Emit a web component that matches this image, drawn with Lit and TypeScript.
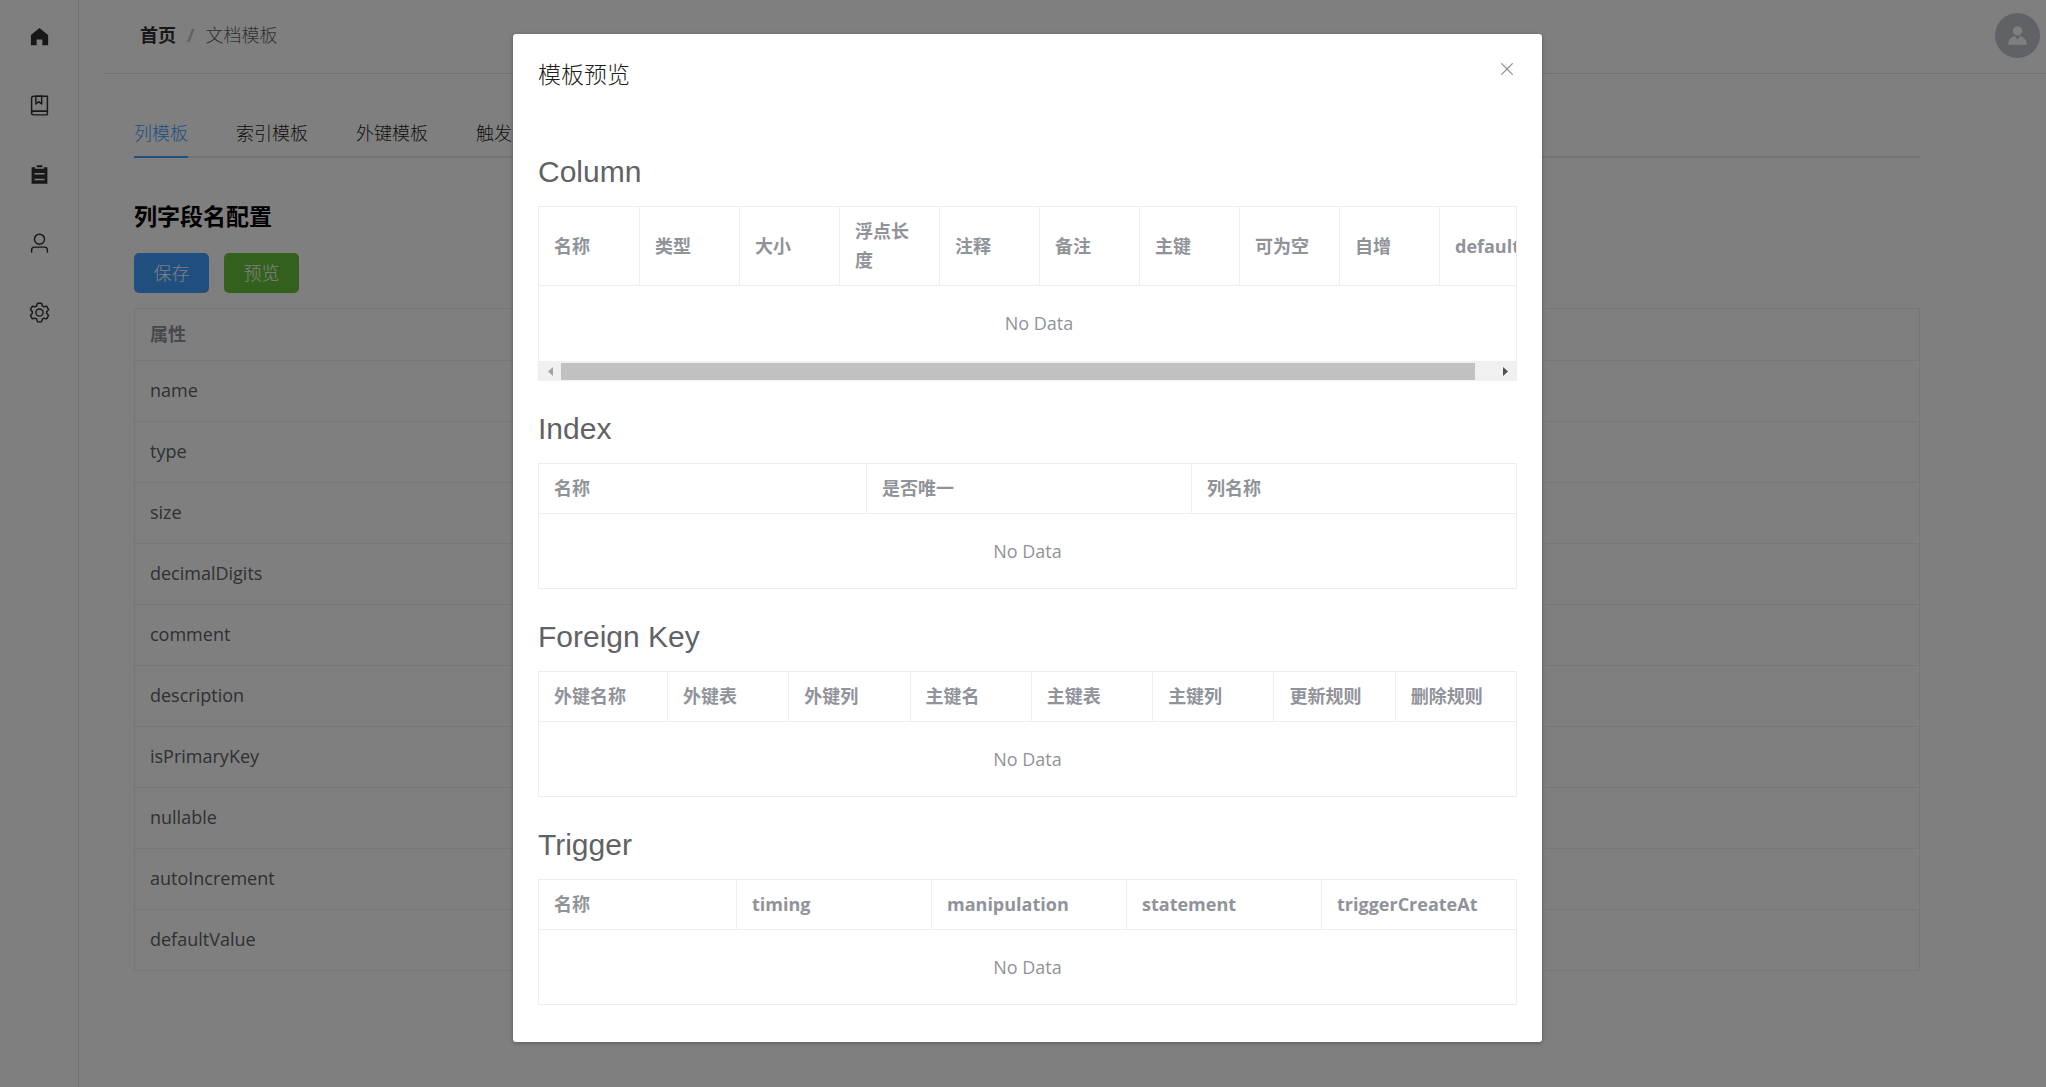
import { LitElement, html, css, svg } from "lit";
import { customElement, property } from "lit/decorators.js";

const ICONS: Record<string, string[]> = {
  home: ["M512 128 128 447.936V896h255.936V640H640v256h255.936V447.936z"],
  collection: [
    "M192 736h640V128H256a64 64 0 0 0-64 64v544zm64-672h608a32 32 0 0 1 32 32v672a32 32 0 0 1-32 32H160l-32 57.536V192A128 128 0 0 1 256 64z",
    "M240 800a48 48 0 1 0 0 96h592v-96H240zm0-64h656v160a64 64 0 0 1-64 64H240a112 112 0 0 1 0-224zm144-608v250.88l96-76.8 96 76.8V128H384zm-64-64h320v381.44a32 32 0 0 1-51.968 24.96L480 384l-108.032 86.4A32 32 0 0 1 320 445.44V64z",
  ],
  list: [
    "M704 192h160v736H160V192h160v64h384v-64zM288 512h448v-64H288v64zm0 256h448v-64H288v64zm96-576V96h256v96H384z",
  ],
  user: [
    "M512 512a192 192 0 1 0 0-384 192 192 0 0 0 0 384zm0 64a256 256 0 1 1 0-512 256 256 0 0 1 0 512zm320 320v-96a96 96 0 0 0-96-96H288a96 96 0 0 0-96 96v96a32 32 0 1 1-64 0v-96a160 160 0 0 1 160-160h448a160 160 0 0 1 160 160v96a32 32 0 1 1-64 0z",
  ],
  setting: [
    "M600.704 64a32 32 0 0 1 30.464 22.208l35.2 109.376c14.784 7.232 28.928 15.36 42.432 24.512l112.384-24.192a32 32 0 0 1 34.432 15.36L944.32 364.8a32 32 0 0 1-4.032 37.504l-77.12 85.12a357.12 357.12 0 0 1 0 49.024l77.12 85.248a32 32 0 0 1 4.032 37.504l-88.704 153.6a32 32 0 0 1-34.432 15.296L708.8 803.904c-13.44 9.088-27.648 17.28-42.368 24.512l-35.264 109.376A32 32 0 0 1 600.704 960H423.296a32 32 0 0 1-30.464-22.208L357.696 828.48a351.616 351.616 0 0 1-42.56-24.64l-112.32 24.256a32 32 0 0 1-34.432-15.36L79.68 659.2a32 32 0 0 1 4.032-37.504l77.12-85.248a357.12 357.12 0 0 1 0-48.896l-77.12-85.248A32 32 0 0 1 79.68 364.8l88.704-153.6a32 32 0 0 1 34.432-15.296l112.32 24.256c13.568-9.152 27.776-17.408 42.56-24.64l35.2-109.312A32 32 0 0 1 423.232 64H600.64zm-23.424 64H446.72l-36.352 113.088-24.512 11.968a294.113 294.113 0 0 0-34.816 20.096l-22.656 15.36-116.224-25.088-65.28 113.152 79.68 88.192-1.92 27.136a293.12 293.12 0 0 0 0 40.192l1.92 27.136-79.808 88.192 65.344 113.152 116.224-25.024 22.656 15.296a294.113 294.113 0 0 0 34.816 20.096l24.512 11.968L446.72 896h130.688l36.48-113.152 24.448-11.904a288.282 288.282 0 0 0 34.752-20.096l22.592-15.296 116.288 25.024 65.28-113.152-79.744-88.192 1.92-27.136a293.12 293.12 0 0 0 0-40.256l-1.92-27.136 79.808-88.128-65.344-113.152-116.288 24.96-22.592-15.232a287.616 287.616 0 0 0-34.752-20.096l-24.448-11.904L577.344 128zM512 320a192 192 0 1 1 0 384 192 192 0 0 1 0-384zm0 64a128 128 0 1 0 0 256 128 128 0 0 0 0-256z",
  ],
  avatar: [
    "M628.736 528.896A416 416 0 0 1 928 928H96a415.872 415.872 0 0 1 299.264-399.104L512 704l116.736-175.104zM720 304a208 208 0 1 1-416 0 208 208 0 0 1 416 0z",
  ],
  close: [
    "M764.288 214.592 512 466.88 259.712 214.592a31.936 31.936 0 0 0-45.12 45.12L466.752 512 214.528 764.224a31.936 31.936 0 1 0 45.12 45.184L512 557.184l252.288 252.288a31.936 31.936 0 0 0 45.12-45.12L557.12 512.064l252.288-252.352a31.936 31.936 0 1 0-45.12-45.184z",
  ],
};

const icon = (name: string) => html`
  <svg class="icon" viewBox="0 0 1024 1024" aria-hidden="true">
    ${ICONS[name].map((d) => svg`<path fill="currentColor" d=${d}></path>`)}
  </svg>
`;

const MENU = [
  { icon: "home", label: "首页" },
  { icon: "collection", label: "项目" },
  { icon: "list", label: "文档模板" },
  { icon: "user", label: "用户" },
  { icon: "setting", label: "设置" },
];

const TABS = ["列模板", "索引模板", "外键模板", "触发器模板"];

const FIELDS = [
  "name",
  "type",
  "size",
  "decimalDigits",
  "comment",
  "description",
  "isPrimaryKey",
  "nullable",
  "autoIncrement",
  "defaultValue",
];

interface Preview {
  title: string;
  columns: string[];
  first: number;
  scroll?: boolean;
}

const PREVIEWS: Preview[] = [
  {
    title: "Column",
    columns: ["名称", "类型", "大小", "浮点长度", "注释", "备注", "主键", "可为空", "自增", "default"],
    first: 101,
    scroll: true,
  },
  { title: "Index", columns: ["名称", "是否唯一", "列名称"], first: 328 },
  {
    title: "Foreign Key",
    columns: ["外键名称", "外键表", "外键列", "主键名", "主键表", "主键列", "更新规则", "删除规则"],
    first: 129,
  },
  {
    title: "Trigger",
    columns: ["名称", "timing", "manipulation", "statement", "triggerCreateAt"],
    first: 198,
  },
];

@customElement("preview-table")
class PreviewTable extends LitElement {
  @property({ attribute: false }) data!: Preview;

  static styles = css`
    :host {
      display: block;
    }
    .title {
      margin: 28px 0 14px;
      font: 400 30px/40px "Liberation Sans", Arial, sans-serif;
      color: #606266;
    }
    .frame {
      border: 1px solid #ebeef5;
      border-width: 1px 0 0 1px;
    }
    .frame.scroll {
      border-right-width: 1px;
    }
    .view {
      overflow: hidden;
    }
    table {
      width: 100%;
      table-layout: fixed;
      border-collapse: separate;
      border-spacing: 0;
    }
    .scroll table {
      width: 1001px;
    }
    th,
    td {
      box-sizing: border-box;
      border: 1px solid #ebeef5;
      border-width: 0 1px 1px 0;
      color: #909399;
    }
    th {
      padding: 10px 15px;
      text-align: left;
      font-weight: 700;
    }
    td {
      height: 75px;
      padding: 0;
      text-align: center;
    }
    .scroll td {
      border-bottom: 0;
    }
    .bar {
      display: flex;
      align-items: stretch;
      box-sizing: border-box;
      height: 20px;
      padding: 2px 0 1px;
      background: #f0f0f0;
    }
    .arrow {
      display: flex;
      align-items: center;
      justify-content: center;
      width: 22px;
      padding: 0;
      border: 0;
      background: none;
      color: #505050;
    }
    .arrow:disabled {
      color: #a3a3a3;
    }
    .arrow svg {
      width: 5px;
      height: 9px;
    }
    .track {
      flex: 1;
      display: flex;
    }
    .thumb {
      background: #c1c1c1;
    }
  `;

  render() {
    const { title, columns, first, scroll } = this.data;
    return html`
      <h2 class="title" id="title">${title}</h2>
      <div class="frame ${scroll ? "scroll" : ""}">
        <div class="view">
          <table aria-labelledby="title">
            <colgroup>
              <col style="width:${first}px" />
              ${columns.slice(1).map(() => html`<col />`)}
            </colgroup>
            <thead>
              <tr>
                ${columns.map((c) => html`<th scope="col">${c}</th>`)}
              </tr>
            </thead>
            <tbody>
              <tr>
                <td colspan=${columns.length}>No Data</td>
              </tr>
            </tbody>
          </table>
        </div>
        ${scroll
          ? html`<div class="bar">
              <button class="arrow" disabled aria-label="向左滚动">
                <svg viewBox="0 0 10 18"><path fill="currentColor" d="M10 0v18L0 9z"></path></svg>
              </button>
              <div class="track"><div class="thumb" style="width:98%"></div></div>
              <button class="arrow" aria-label="向右滚动">
                <svg viewBox="0 0 10 18"><path fill="currentColor" d="M0 0v18l10-9z"></path></svg>
              </button>
            </div>`
          : null}
      </div>
    `;
  }
}

@customElement("app-root")
class AppRoot extends LitElement {
  static styles = css`
    :host {
      display: block;
      position: relative;
      min-height: 100vh;
      background: #fff;
      color: #606266;
      font: 400 18px/29px "Open Sans", "Noto Sans CJK SC", sans-serif;
    }
    .icon {
      display: block;
      width: 23px;
      height: 23px;
    }
    button {
      font: inherit;
    }
    a {
      color: inherit;
      text-decoration: none;
    }
    .page {
      display: flex;
      min-height: 100vh;
    }
    .side {
      box-sizing: border-box;
      width: 79px;
      padding-top: 2px;
      border-right: 1px solid #e6e6e6;
    }
    .menu-item {
      display: flex;
      align-items: center;
      justify-content: center;
      height: 69px;
      color: #303133;
    }
    .main {
      flex: 1;
      min-width: 0;
    }
    .header {
      display: flex;
      align-items: center;
      justify-content: space-between;
      box-sizing: border-box;
      height: 74px;
      margin-left: 24px;
      padding: 0 6px 2px 37px;
      border-bottom: 1px solid #e4e7ed;
    }
    .crumbs {
      display: flex;
      gap: 11px;
      font-weight: 300;
    }
    .home {
      font-weight: 700;
      color: #303133;
    }
    .sep {
      font-weight: 700;
      color: #c0c4cc;
    }
    .avatar {
      display: flex;
      align-items: center;
      justify-content: center;
      width: 45px;
      height: 45px;
      padding: 0;
      border: 0;
      border-radius: 50%;
      background: #c0c4cc;
      color: #fff;
    }
    .content {
      padding: 37px 126px 40px 55px;
    }
    .tabs {
      display: flex;
      gap: 48px;
      border-bottom: 2px solid #e4e7ed;
    }
    .tab {
      height: 47px;
      margin-bottom: -2px;
      padding: 0;
      border: 0;
      border-bottom: 2px solid transparent;
      background: none;
      font-weight: 300;
      color: #1d1e20;
    }
    .tab.active {
      border-color: #409eff;
      color: #409eff;
    }
    .heading {
      margin: 43px 0 22px;
      font-size: 23px;
      line-height: 30px;
      font-weight: 700;
      color: #000;
    }
    .actions {
      display: flex;
      gap: 15px;
      margin-bottom: 15px;
    }
    .btn {
      width: 75px;
      height: 40px;
      padding: 0;
      border: 0;
      border-radius: 5px;
      font-weight: 300;
      color: #fff;
    }
    .primary {
      background: #409eff;
    }
    .success {
      background: #67c23a;
    }
    .fields {
      width: 100%;
      border: 1px solid #ebeef5;
      border-bottom: 0;
      border-collapse: separate;
      border-spacing: 0;
    }
    .fields th,
    .fields td {
      box-sizing: border-box;
      border-bottom: 1px solid #ebeef5;
      text-align: left;
    }
    .fields th {
      padding: 11px 15px;
      color: #909399;
    }
    .fields td {
      height: 61px;
      padding: 0 15px 1px;
    }
    .overlay {
      position: absolute;
      inset: 0;
      display: flex;
      align-items: flex-start;
      justify-content: center;
      padding: 34px 0 34px 9px;
      background: rgba(0, 0, 0, 0.5);
    }
    .dialog {
      box-sizing: border-box;
      width: calc(50vw + 6px);
      padding: 26px 25px 37px;
      border-radius: 3px;
      background: #fff;
      box-shadow: 0 1px 4px rgba(0, 0, 0, 0.3);
    }
    .dialog-head {
      display: flex;
      align-items: flex-start;
      justify-content: space-between;
      height: 64px;
    }
    .dialog-title {
      margin: 0;
      font-size: 23px;
      line-height: 28px;
      font-weight: 300;
      color: #1d1e20;
    }
    .close {
      display: flex;
      align-items: center;
      width: 20px;
      height: 18px;
      padding: 0;
      border: 0;
      background: none;
      color: #909399;
    }
    .close .icon {
      width: 20px;
      height: 20px;
    }
  `;

  render() {
    return html`
      <div class="page">
        <nav class="side" aria-label="主菜单">
          ${MENU.map(
            (m) => html`<a class="menu-item" href="#" aria-label=${m.label}>${icon(m.icon)}</a>`
          )}
        </nav>
        <div class="main">
          <header class="header">
            <nav class="crumbs" aria-label="路径">
              <a class="home" href="#">首页</a>
              <span class="sep">/</span>
              <span>文档模板</span>
            </nav>
            <button class="avatar" aria-label="账户">${icon("avatar")}</button>
          </header>
          <main class="content">
            <div class="tabs" role="tablist">
              ${TABS.map(
                (t, i) => html`<button
                  class="tab ${i === 0 ? "active" : ""}"
                  role="tab"
                  aria-selected=${i === 0 ? "true" : "false"}
                >${t}</button>`
              )}
            </div>
            <h1 class="heading">列字段名配置</h1>
            <div class="actions">
              <button class="btn primary">保存</button>
              <button class="btn success">预览</button>
            </div>
            <table class="fields">
              <thead>
                <tr><th scope="col">属性</th></tr>
              </thead>
              <tbody>
                ${FIELDS.map((f) => html`<tr><td>${f}</td></tr>`)}
              </tbody>
            </table>
          </main>
        </div>
      </div>
      <div class="overlay">
        <section class="dialog" role="dialog" aria-modal="true" aria-labelledby="dialog-title">
          <div class="dialog-head">
            <h2 class="dialog-title" id="dialog-title">模板预览</h2>
            <button class="close" aria-label="关闭">${icon("close")}</button>
          </div>
          ${PREVIEWS.map((p) => html`<preview-table .data=${p}></preview-table>`)}
        </section>
      </div>
    `;
  }
}
